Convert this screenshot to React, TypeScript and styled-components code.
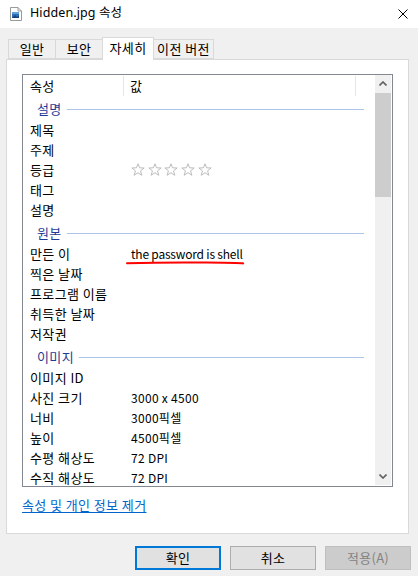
import styled, { createGlobalStyle } from "styled-components";

const GlobalStyle = createGlobalStyle`
  html, body {
    margin: 0;
    padding: 0;
  }
  body {
    background: #f0f0f0;
    font-family: "Noto Sans CJK KR", "Noto Sans", sans-serif;
    font-size: 13px;
    letter-spacing: 0.4px;
    color: #000;
  }
`;

const Window = styled.div`
  width: 418px;
  height: 576px;
  display: flex;
  flex-direction: column;
  background: #f0f0f0;
  overflow: hidden;
`;

const TitleBar = styled.div`
  height: 28px;
  flex-shrink: 0;
  background: #fff;
  display: flex;
  align-items: center;
  padding: 0 10px 0 10px;
  gap: 8px;
  box-sizing: border-box;
`;

const TitleText = styled.div`
  flex: 1;
  font-family: "Noto Sans", "Noto Sans CJK KR", sans-serif;
  font-size: 12.5px;
  letter-spacing: 0.1px;
  line-height: 16px;
  margin-top: -2px;
  color: #000;
`;

const TabStrip = styled.div`
  display: flex;
  align-items: flex-end;
  margin-top: 8px;
  padding-left: 8px;
  height: 23px;
  position: relative;
  z-index: 1;
`;

const Tab = styled.div<{ $active?: boolean; $w: number }>`
  width: ${(p) => p.$w}px;
  height: ${(p) => (p.$active ? 23 : 20)}px;
  box-sizing: border-box;
  border: 1px solid #d9d9d9;
  border-bottom: ${(p) => (p.$active ? "none" : "1px solid #d9d9d9")};
  background: ${(p) => (p.$active ? "#fff" : "#f0f0f0")};
  margin-left: -1px;
  display: flex;
  justify-content: center;
  align-items: center;
  padding-bottom: ${(p) => (p.$active ? 3 : 0)}px;
  line-height: 14px;
  margin-bottom: ${(p) => (p.$active ? -1 : 0)}px;

  &:first-child {
    margin-left: 0;
  }
`;

const Panel = styled.div`
  margin: 0 9px 0 6px;
  height: 475px;
  box-sizing: border-box;
  background: #fff;
  border: 1px solid #d9d9d9;
  padding: 14px 15px 0 15px;
  display: flex;
  flex-direction: column;
`;

const ListBox = styled.div`
  width: 371px;
  height: 413px;
  box-sizing: border-box;
  border: 1px solid #828790;
  display: flex;
  background: #fff;
`;

const ListContent = styled.div`
  flex: 1;
  overflow: hidden;
`;

const HeaderRow = styled.div`
  display: grid;
  grid-template-columns: 101px 232px 1fr;
  height: 21px;
`;

const HeaderCell = styled.div<{ $pad: number }>`
  display: flex;
  align-items: center;
  padding-left: ${(p) => p.$pad}px;
  border-right: 1px solid #e5e5e5;
  line-height: 14px;
  margin-top: 1px;

  &:last-child {
    border-right: none;
  }
`;

const GroupRow = styled.div`
  height: 24px;
  display: flex;
  align-items: center;
  padding: 2px 11px 0 14px;
  box-sizing: border-box;
  gap: 5px;
  color: #1e3a94;
  line-height: 14px;
`;

const GroupLine = styled.div`
  flex: 1;
  height: 1px;
  background: #aec3e8;
`;

const DataRow = styled.div`
  display: grid;
  grid-template-columns: 108px 1fr;
  height: 20px;
  align-items: center;
  line-height: 14px;
`;

const NameCell = styled.div`
  padding-left: 7px;
  white-space: nowrap;
`;

const ValueCell = styled.div`
  white-space: nowrap;
  display: flex;
  align-items: center;
  font-size: 12px;
  letter-spacing: 0.3px;
`;

const Annotated = styled.span`
  position: relative;
  letter-spacing: -0.2px;
`;

const RedMark = styled.svg`
  position: absolute;
  left: -5px;
  bottom: -4px;
  overflow: visible;
`;

const Stars = styled.div`
  display: flex;
  gap: 2.7px;
  margin-top: -1px;
`;

const Scrollbar = styled.div`
  width: 16px;
  margin: 0 1px 1px 0;
  background: #f0f0f0;
  display: flex;
  flex-direction: column;
`;

const ArrowBox = styled.div`
  height: 17px;
  display: flex;
  align-items: center;
  justify-content: center;
  flex-shrink: 0;
`;

const Thumb = styled.div`
  height: 104px;
  margin-top: 1px;
  background: #cdcdcd;
`;

const Track = styled.div`
  flex: 1;
`;

const RemoveLink = styled.a`
  margin-top: 10px;
  align-self: flex-start;
  color: #0066cc;
  text-decoration: underline;
  text-underline-offset: 2px;
  line-height: 16px;
  cursor: pointer;
`;

const ButtonRow = styled.div`
  display: flex;
  justify-content: flex-end;
  gap: 9px;
  padding-right: 7px;
  margin-top: 12px;
`;

const Button = styled.button<{ $variant?: "default" | "disabled" }>`
  width: 86px;
  height: 24px;
  box-sizing: border-box;
  font-family: "Noto Sans CJK KR", "Noto Sans", sans-serif;
  font-size: 13px;
  letter-spacing: 0.3px;
  line-height: 14px;
  padding: 0;
  background: ${(p) => (p.$variant === "disabled" ? "#cccccc" : "#e1e1e1")};
  color: ${(p) => (p.$variant === "disabled" ? "#838383" : "#000")};
  border: ${(p) =>
    p.$variant === "default"
      ? "2px solid #0078d7"
      : p.$variant === "disabled"
      ? "1px solid #bfbfbf"
      : "1px solid #adadad"};
`;

const FileIcon = () => (
  <svg width="12" height="14" viewBox="0 0 12 14">
    <path d="M0.5 0.5 H8 L11.5 4 V13.5 H0.5 Z" fill="#fff" stroke="#9a9a9a" />
    <path d="M8 0.5 V4 H11.5" fill="none" stroke="#9a9a9a" />
    <rect x="2" y="5" width="7" height="6" fill="#2f6fb8" />
    <rect x="2" y="5" width="7" height="2" fill="#5fa0dc" />
    <path d="M2 11 L5 8 L7 10 L9 8.5 V11 Z" fill="#18407a" />
  </svg>
);

const CloseIcon = () => (
  <svg width="10" height="10" viewBox="0 0 10 10">
    <path d="M0.5 0.5 L9.5 9.5 M9.5 0.5 L0.5 9.5" stroke="#000" strokeWidth="1" />
  </svg>
);

const Star = () => (
  <svg width="14" height="14" viewBox="0 0 14 14">
    <polygon
      points="7,0.8 8.59,4.82 13.18,4.99 9.57,7.83 10.82,12.26 7,9.7 3.18,12.26 4.43,7.83 0.82,4.99 5.41,4.82"
      fill="#fff"
      stroke="#bcbcbc"
      strokeWidth="1"
      strokeLinejoin="round"
    />
  </svg>
);

const Chevron = ({ down }: { down?: boolean }) => (
  <svg width="8" height="5" viewBox="0 0 8 5">
    <path
      d={down ? "M0.5 0.5 L4 4 L7.5 0.5" : "M0.5 4.5 L4 1 L7.5 4.5"}
      fill="none"
      stroke="#606060"
      strokeWidth="1.6"
    />
  </svg>
);

type Item =
  | { kind: "group"; label: string }
  | { kind: "row"; name: string; value?: string; stars?: boolean; mark?: boolean };

const items: Item[] = [
  { kind: "group", label: "설명" },
  { kind: "row", name: "제목" },
  { kind: "row", name: "주제" },
  { kind: "row", name: "등급", stars: true },
  { kind: "row", name: "태그" },
  { kind: "row", name: "설명" },
  { kind: "group", label: "원본" },
  { kind: "row", name: "만든 이", value: "the password is shell", mark: true },
  { kind: "row", name: "찍은 날짜" },
  { kind: "row", name: "프로그램 이름" },
  { kind: "row", name: "취득한 날짜" },
  { kind: "row", name: "저작권" },
  { kind: "group", label: "이미지" },
  { kind: "row", name: "이미지 ID" },
  { kind: "row", name: "사진 크기", value: "3000 x 4500" },
  { kind: "row", name: "너비", value: "3000픽셀" },
  { kind: "row", name: "높이", value: "4500픽셀" },
  { kind: "row", name: "수평 해상도", value: "72 DPI" },
  { kind: "row", name: "수직 해상도", value: "72 DPI" },
];

const renderItem = (item: Item, i: number) => {
  if (item.kind === "group") {
    return (
      <GroupRow key={i}>
        <span>{item.label}</span>
        <GroupLine />
      </GroupRow>
    );
  }
  return (
    <DataRow key={i}>
      <NameCell>{item.name}</NameCell>
      <ValueCell>
        {item.stars ? (
          <Stars>
            {[0, 1, 2, 3, 4].map((s) => (
              <Star key={s} />
            ))}
          </Stars>
        ) : item.mark ? (
          <Annotated>
            {item.value}
            <RedMark width="118" height="4" viewBox="0 0 118 4">
              <path
                d="M1 2.2 Q 40 1.2 80 1.6 T 117 2.4"
                fill="none"
                stroke="#ff0000"
                strokeWidth="2"
                strokeLinecap="round"
              />
            </RedMark>
          </Annotated>
        ) : (
          item.value
        )}
      </ValueCell>
    </DataRow>
  );
};

export default function App() {
  return (
    <>
      <GlobalStyle />
      <Window>
        <TitleBar>
          <FileIcon />
          <TitleText>Hidden.jpg 속성</TitleText>
          <CloseIcon />
        </TitleBar>

        <TabStrip>
          <Tab $w={48}>일반</Tab>
          <Tab $w={48}>보안</Tab>
          <Tab $w={52} $active>
            자세히
          </Tab>
          <Tab $w={61}>이전 버전</Tab>
        </TabStrip>

        <Panel>
          <ListBox>
            <ListContent>
              <HeaderRow>
                <HeaderCell $pad={7}>속성</HeaderCell>
                <HeaderCell $pad={6}>값</HeaderCell>
                <HeaderCell $pad={0} />
              </HeaderRow>
              {items.map(renderItem)}
            </ListContent>
            <Scrollbar>
              <ArrowBox>
                <Chevron />
              </ArrowBox>
              <Thumb />
              <Track />
              <ArrowBox>
                <Chevron down />
              </ArrowBox>
            </Scrollbar>
          </ListBox>
          <RemoveLink>속성 및 개인 정보 제거</RemoveLink>
        </Panel>

        <ButtonRow>
          <Button $variant="default">확인</Button>
          <Button>취소</Button>
          <Button $variant="disabled">적용(A)</Button>
        </ButtonRow>
      </Window>
    </>
  );
}
